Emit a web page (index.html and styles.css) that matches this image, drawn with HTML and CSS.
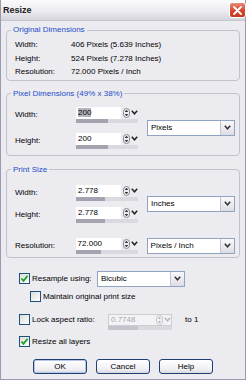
FILE: index.html
```html
<!DOCTYPE html>
<html lang="en">
<head>
    <meta charset="UTF-8">
    <title>Resize</title>
    <link rel="stylesheet" href="styles.css">
</head>
<body>
    <div class="window">
        <div class="titlebar">
            <span class="title">Resize</span>
            <span class="close-btn">
                <svg width="9" height="9" viewBox="0 0 9 9"><path d="M1 1 L8 8 M8 1 L1 8" stroke="#fff" stroke-width="1.8" stroke-linecap="round"/></svg>
            </span>
        </div>

        <div class="dialog">
            <fieldset class="group group-original">
                <legend>Original Dimensions</legend>
                <div class="info-row"><span class="info-label">Width:</span><span>406 Pixels (5.639 Inches)</span></div>
                <div class="info-row"><span class="info-label">Height:</span><span>524 Pixels (7.278 Inches)</span></div>
                <div class="info-row"><span class="info-label">Resolution:</span><span>72.000 Pixels / Inch</span></div>
            </fieldset>

            <fieldset class="group group-pixel">
                <legend>Pixel Dimensions (49% x 38%)</legend>
                <div class="pair">
                    <div class="pair-fields">
                        <div class="field-row">
                            <span class="field-label">Width:</span>
                            <div class="spin">
                                <div class="spin-top">
                                    <span class="spin-field"><span class="selected">200</span></span>
                                    <span class="spin-arrows"><svg width="7" height="10" viewBox="0 0 7 10"><rect x="0.5" y="0.5" width="6" height="9" rx="3" fill="none" stroke="#8a8a96"/><path d="M3.5 1.8 L5.3 4 L1.7 4 Z M3.5 8.2 L5.3 6 L1.7 6 Z" fill="#333"/></svg></span>
                                    <span class="spin-drop"><svg width="7" height="5" viewBox="0 0 7 5"><path d="M0.8 0.8 L3.5 3.8 L6.2 0.8" fill="none" stroke="#222" stroke-width="1.5"/></svg></span>
                                </div>
                                <div class="spin-bar"><div class="spin-fill" style="width: 52%"></div></div>
                            </div>
                        </div>
                        <div class="field-row">
                            <span class="field-label">Height:</span>
                            <div class="spin">
                                <div class="spin-top">
                                    <span class="spin-field">200</span>
                                    <span class="spin-arrows"><svg width="7" height="10" viewBox="0 0 7 10"><rect x="0.5" y="0.5" width="6" height="9" rx="3" fill="none" stroke="#8a8a96"/><path d="M3.5 1.8 L5.3 4 L1.7 4 Z M3.5 8.2 L5.3 6 L1.7 6 Z" fill="#333"/></svg></span>
                                    <span class="spin-drop"><svg width="7" height="5" viewBox="0 0 7 5"><path d="M0.8 0.8 L3.5 3.8 L6.2 0.8" fill="none" stroke="#222" stroke-width="1.5"/></svg></span>
                                </div>
                                <div class="spin-bar"><div class="spin-fill" style="width: 52%"></div></div>
                            </div>
                        </div>
                    </div>
                    <div class="select unit-select">
                        <span class="select-text">Pixels</span>
                        <span class="select-btn"><svg width="7" height="5" viewBox="0 0 7 5"><path d="M0.8 0.8 L3.5 3.8 L6.2 0.8" fill="none" stroke="#333" stroke-width="1.5"/></svg></span>
                    </div>
                </div>
            </fieldset>

            <fieldset class="group group-print">
                <legend>Print Size</legend>
                <div class="pair">
                    <div class="pair-fields">
                        <div class="field-row">
                            <span class="field-label">Width:</span>
                            <div class="spin">
                                <div class="spin-top">
                                    <span class="spin-field">2.778</span>
                                    <span class="spin-arrows"><svg width="7" height="10" viewBox="0 0 7 10"><rect x="0.5" y="0.5" width="6" height="9" rx="3" fill="none" stroke="#8a8a96"/><path d="M3.5 1.8 L5.3 4 L1.7 4 Z M3.5 8.2 L5.3 6 L1.7 6 Z" fill="#333"/></svg></span>
                                    <span class="spin-drop"><svg width="7" height="5" viewBox="0 0 7 5"><path d="M0.8 0.8 L3.5 3.8 L6.2 0.8" fill="none" stroke="#222" stroke-width="1.5"/></svg></span>
                                </div>
                                <div class="spin-bar"><div class="spin-fill" style="width: 47%"></div></div>
                            </div>
                        </div>
                        <div class="field-row">
                            <span class="field-label">Height:</span>
                            <div class="spin">
                                <div class="spin-top">
                                    <span class="spin-field">2.778</span>
                                    <span class="spin-arrows"><svg width="7" height="10" viewBox="0 0 7 10"><rect x="0.5" y="0.5" width="6" height="9" rx="3" fill="none" stroke="#8a8a96"/><path d="M3.5 1.8 L5.3 4 L1.7 4 Z M3.5 8.2 L5.3 6 L1.7 6 Z" fill="#333"/></svg></span>
                                    <span class="spin-drop"><svg width="7" height="5" viewBox="0 0 7 5"><path d="M0.8 0.8 L3.5 3.8 L6.2 0.8" fill="none" stroke="#222" stroke-width="1.5"/></svg></span>
                                </div>
                                <div class="spin-bar"><div class="spin-fill" style="width: 47%"></div></div>
                            </div>
                        </div>
                    </div>
                    <div class="select unit-select">
                        <span class="select-text">Inches</span>
                        <span class="select-btn"><svg width="7" height="5" viewBox="0 0 7 5"><path d="M0.8 0.8 L3.5 3.8 L6.2 0.8" fill="none" stroke="#333" stroke-width="1.5"/></svg></span>
                    </div>
                </div>
                <div class="field-row res-row">
                    <span class="field-label">Resolution:</span>
                    <div class="spin">
                        <div class="spin-top">
                            <span class="spin-field">72.000</span>
                            <span class="spin-arrows"><svg width="7" height="10" viewBox="0 0 7 10"><rect x="0.5" y="0.5" width="6" height="9" rx="3" fill="none" stroke="#8a8a96"/><path d="M3.5 1.8 L5.3 4 L1.7 4 Z M3.5 8.2 L5.3 6 L1.7 6 Z" fill="#333"/></svg></span>
                            <span class="spin-drop"><svg width="7" height="5" viewBox="0 0 7 5"><path d="M0.8 0.8 L3.5 3.8 L6.2 0.8" fill="none" stroke="#222" stroke-width="1.5"/></svg></span>
                        </div>
                        <div class="spin-bar"><div class="spin-fill" style="width: 41%"></div></div>
                    </div>
                    <div class="select unit-select">
                        <span class="select-text">Pixels / Inch</span>
                        <span class="select-btn"><svg width="7" height="5" viewBox="0 0 7 5"><path d="M0.8 0.8 L3.5 3.8 L6.2 0.8" fill="none" stroke="#333" stroke-width="1.5"/></svg></span>
                    </div>
                </div>
            </fieldset>

            <div class="options">
                <div class="opt-row resample-row">
                    <span class="check checked"><svg width="9" height="9" viewBox="0 0 9 9"><path d="M1.5 4.5 L3.5 6.8 L7.6 1.8" fill="none" stroke="#21a121" stroke-width="1.8"/></svg></span>
                    <span class="opt-label resample-label">Resample using:</span>
                    <div class="select method-select">
                        <span class="select-text">Bicubic</span>
                        <span class="select-btn"><svg width="7" height="5" viewBox="0 0 7 5"><path d="M0.8 0.8 L3.5 3.8 L6.2 0.8" fill="none" stroke="#333" stroke-width="1.5"/></svg></span>
                    </div>
                </div>
                <div class="opt-row maintain-row">
                    <span class="check"></span>
                    <span class="opt-label">Maintain original print size</span>
                </div>
                <div class="opt-row lock-row">
                    <span class="check"></span>
                    <span class="opt-label lock-label">Lock aspect ratio:</span>
                    <div class="spin spin-disabled">
                        <div class="spin-top">
                            <span class="spin-field">0.7748</span>
                            <span class="spin-arrows"><svg width="7" height="10" viewBox="0 0 7 10"><rect x="0.5" y="0.5" width="6" height="9" rx="3" fill="none" stroke="#c4c4cc"/><path d="M3.5 1.8 L5.3 4 L1.7 4 Z M3.5 8.2 L5.3 6 L1.7 6 Z" fill="#b8b8c0"/></svg></span>
                            <span class="spin-drop"><svg width="7" height="5" viewBox="0 0 7 5"><path d="M0.8 0.8 L3.5 3.8 L6.2 0.8" fill="none" stroke="#b8b8c0" stroke-width="1.5"/></svg></span>
                        </div>
                        <div class="spin-bar"><div class="spin-fill" style="width: 47%"></div></div>
                    </div>
                    <span class="to-one">to 1</span>
                </div>
                <div class="opt-row resize-row">
                    <span class="check checked"><svg width="9" height="9" viewBox="0 0 9 9"><path d="M1.5 4.5 L3.5 6.8 L7.6 1.8" fill="none" stroke="#21a121" stroke-width="1.8"/></svg></span>
                    <span class="opt-label">Resize all layers</span>
                </div>
            </div>

            <div class="buttons">
                <button class="btn btn-default">OK</button>
                <button class="btn">Cancel</button>
                <button class="btn">Help</button>
            </div>
        </div>
    </div>
</body>
</html>
```

FILE: styles.css
```css
* {
    box-sizing: border-box;
}

body {
    margin: 0;
    font-family: "Liberation Sans", Arial, sans-serif;
    font-size: 8px;
    color: #000;
    background: #ecebf0;
}

.window {
    width: 246px;
    height: 380px;
    background: #ecebf0;
    border: 1px solid #9a9ab2;
    border-top: none;
}

.titlebar {
    height: 21px;
    display: flex;
    align-items: center;
    justify-content: space-between;
    padding-left: 2px;
    background: linear-gradient(#fbfbfd, #ebebf0 55%, #d4d4dc);
    border-bottom: 1px solid #c6c6d0;
}

.title {
    font-size: 9px;
    font-weight: bold;
    color: #202020;
}

.close-btn {
    width: 17px;
    height: 16px;
    margin-right: -1px;
    display: flex;
    align-items: center;
    justify-content: center;
    border: 1px solid #fff;
    border-radius: 3px;
    background: linear-gradient(#e98a78, #d8452c 55%, #c4381f);
}

.dialog {
    padding: 4px 5px 0 5px;
}

/* group boxes */
.group {
    margin: 0;
    min-width: 0;
    border: 1px solid #c2c2cc;
    border-radius: 4px;
    padding: 0 4px 0 8px;
}

.group legend {
    color: #1d4dc8;
    padding: 0 2px;
    margin-left: -4px;
    line-height: 10px;
}

.group-original {
    padding-top: 3px;
    padding-bottom: 1px;
}

.group-pixel {
    margin-top: 8px;
    padding-top: 8px;
    padding-bottom: 6px;
}

.group-print {
    margin-top: 9px;
    padding-top: 10px;
    padding-bottom: 3px;
}

.info-row {
    display: flex;
    align-items: center;
    height: 13.5px;
}

.info-label {
    width: 56px;
}

.pair {
    display: flex;
    align-items: center;
    gap: 9px;
}

.pair-fields {
    display: flex;
    flex-direction: column;
    gap: 10px;
}

.group-print .pair-fields {
    gap: 6px;
}

.field-row {
    display: flex;
    align-items: center;
}

.field-label {
    width: 61px;
}

.res-row {
    margin-top: 15px;
}

.res-row .select {
    margin-left: 9px;
}

/* spin edit with slider */
.spin {
    width: 62px;
    height: 16px;
}

.spin-top {
    display: flex;
    align-items: center;
    height: 12px;
}

.spin-field {
    width: 45px;
    height: 12px;
    background: #fff;
    padding-left: 2px;
    line-height: 12px;
    margin-right: 2px;
}

.selected {
    background: #b4b4bc;
}

.spin-arrows {
    width: 8px;
    display: flex;
    align-items: center;
}

.spin-drop {
    width: 7px;
    display: flex;
    align-items: center;
}

.spin-bar {
    height: 4px;
    background: #d9d9df;
}

.spin-fill {
    height: 100%;
    background: #a4a4b0;
}

.spin-disabled {
    width: 64px;
}

.spin-disabled .spin-top {
    border: 1px solid #cdcdd4;
    background: #f3f3f6;
}

.spin-disabled .spin-field {
    width: 47px;
    height: 10px;
    line-height: 10px;
    background: #f3f3f6;
    color: #a8a8b0;
}

.spin-disabled .spin-fill {
    background: #c4c4cc;
}

/* drop-down lists */
.select {
    height: 16px;
    display: flex;
    align-items: center;
    background: #fff;
    border: 1px solid #8fa4c0;
}

.select-text {
    flex: 1;
    padding-left: 3px;
}

.select-btn {
    width: 14px;
    height: 14px;
    display: flex;
    align-items: center;
    justify-content: center;
    background: linear-gradient(#fafafc, #dcdce4);
    border-left: 1px solid #c4c4d0;
}

.unit-select {
    width: 89px;
}

.method-select {
    width: 88px;
}

/* options below the groups */
.options {
    margin-top: 13px;
    padding-left: 13px;
}

.opt-row {
    display: flex;
    align-items: center;
}

.check {
    width: 11px;
    height: 11px;
    flex-shrink: 0;
    display: flex;
    align-items: center;
    justify-content: center;
    border: 1px solid #1c5180;
    background: linear-gradient(135deg, #dcdcd7, #fff);
}

.opt-label {
    margin-left: 2px;
}

.resample-row {
    height: 16px;
}

.resample-label {
    width: 65px;
}

.maintain-row {
    height: 16px;
    margin-top: 2px;
    padding-left: 11px;
}

.lock-row {
    align-items: flex-start;
    margin-top: 9px;
}

.lock-label {
    width: 76px;
    line-height: 12px;
}

.to-one {
    margin-left: 13px;
    line-height: 12px;
}

.resize-row {
    height: 16px;
    margin-top: 4px;
}

.buttons {
    display: flex;
    justify-content: center;
    gap: 9px;
    margin-top: 9px;
}

.btn {
    width: 54px;
    height: 15px;
    padding: 0;
    font-family: "Liberation Sans", Arial, sans-serif;
    font-size: 8px;
    color: #000;
    border: 1px solid #1f3f74;
    border-radius: 3px;
    background: linear-gradient(#ffffff, #f0f0f4 70%, #d8d8e0);
}

.btn-default {
    box-shadow: inset 0 0 0 1px #b8c8ea;
}
```
